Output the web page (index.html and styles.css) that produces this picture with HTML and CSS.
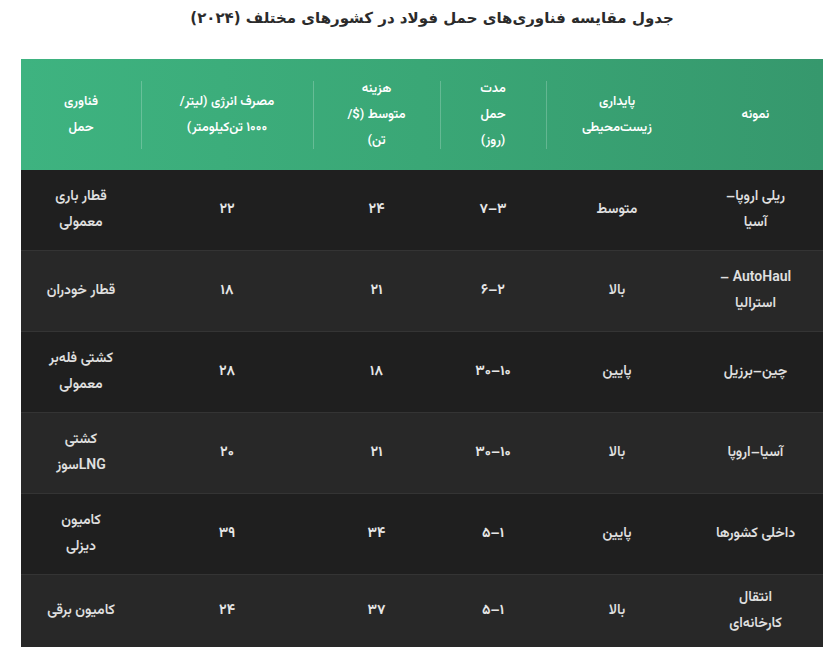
FILE: index.html
```html
<!DOCTYPE html>
<html lang="fa" dir="rtl">
<head>
<meta charset="utf-8">
<title>جدول مقایسه فناوری‌های حمل فولاد</title>
<link rel="stylesheet" href="styles.css">
</head>
<body>
<div class="page">
  <h1 class="title">جدول مقایسه فناوری‌های حمل فولاد در کشورهای مختلف (۲۰۲۴)</h1>
  <table class="grid">
    <colgroup>
      <col class="c-sample">
      <col class="c-green">
      <col class="c-time">
      <col class="c-cost">
      <col class="c-energy">
      <col class="c-tech">
    </colgroup>
    <thead>
      <tr>
        <th>نمونه</th>
        <th class="sep">پایداری<br>زیست‌محیطی</th>
        <th class="sep">مدت<br>حمل<br>(روز)</th>
        <th class="sep">هزینه<br>متوسط ($/<br>تن)</th>
        <th class="sep">مصرف انرژی (لیتر/<br>۱۰۰۰ تن‌کیلومتر)</th>
        <th>فناوری<br>حمل</th>
      </tr>
    </thead>
    <tbody>
      <tr>
        <td>ریلی اروپا–<br>آسیا</td>
        <td>متوسط</td>
        <td class="num">۳–۷</td>
        <td class="num">۲۴</td>
        <td class="num">۲۲</td>
        <td>قطار باری<br>معمولی</td>
      </tr>
      <tr>
        <td>AutoHaul –<br>استرالیا</td>
        <td>بالا</td>
        <td class="num">۲–۶</td>
        <td class="num">۲۱</td>
        <td class="num">۱۸</td>
        <td>قطار خودران</td>
      </tr>
      <tr>
        <td>چین–برزیل</td>
        <td>پایین</td>
        <td class="num">۱۰–۳۰</td>
        <td class="num">۱۸</td>
        <td class="num">۲۸</td>
        <td>کشتی فله‌بر<br>معمولی</td>
      </tr>
      <tr>
        <td>آسیا–اروپا</td>
        <td>بالا</td>
        <td class="num">۱۰–۳۰</td>
        <td class="num">۲۱</td>
        <td class="num">۲۰</td>
        <td>کشتی<br>LNGسوز</td>
      </tr>
      <tr>
        <td>داخلی کشورها</td>
        <td>پایین</td>
        <td class="num">۱–۵</td>
        <td class="num">۳۴</td>
        <td class="num">۳۹</td>
        <td>کامیون<br>دیزلی</td>
      </tr>
      <tr>
        <td>انتقال<br>کارخانه‌ای</td>
        <td>بالا</td>
        <td class="num">۱–۵</td>
        <td class="num">۳۷</td>
        <td class="num">۲۴</td>
        <td>کامیون برقی</td>
      </tr>
    </tbody>
  </table>
</div>
</body>
</html>
```

FILE: styles.css
```css
* { box-sizing: border-box; }

html, body {
  margin: 0;
  padding: 0;
  background: #ffffff;
}

body {
  font-family: "Vazirmatn", "Noto Sans Arabic", "DejaVu Sans", sans-serif;
}

.page {
  margin: 0 7px 0 21px;
  padding-top: 6px;
}

.title {
  margin: 0 0 29px 0;
  padding-left: 20px;
  text-align: center;
  font-family: "DejaVu Sans", sans-serif;
  font-size: 15px;
  line-height: 24px;
  font-weight: 700;
  color: #2b2b2b;
}

.grid {
  width: 802px;
  table-layout: fixed;
  border-collapse: collapse;
  border-spacing: 0;
  background: #1f1f1f;
}

.c-sample { width: 135px; }
.c-green  { width: 142px; }
.c-time   { width: 106px; }
.c-cost   { width: 127px; }
.c-energy { width: 172px; }
.c-tech   { width: 120px; }

.grid thead tr {
  background: linear-gradient(90deg, #3eb380 0%, #3aa776 50%, #36986d 100%);
}

.grid th {
  height: 111px;
  padding: 0 8px;
  color: #ffffff;
  font-size: 13px;
  font-weight: 600;
  line-height: 26px;
  text-align: center;
  vertical-align: middle;
  white-space: nowrap;
}

.grid th.sep {
  background-image: linear-gradient(rgba(255,255,255,0.22), rgba(255,255,255,0.22));
  background-repeat: no-repeat;
  background-size: 1px 68px;
  background-position: left center;
}

.grid td {
  padding: 14px 8px;
  color: #e0e0e0;
  font-size: 14px;
  font-weight: 600;
  line-height: 26px;
  text-align: center;
  vertical-align: middle;
  white-space: nowrap;
}

.grid tbody tr {
  background: #1f1f1f;
  border-top: 1px solid #343434;
}

.grid tbody tr:first-child {
  border-top: none;
}

.grid tbody tr:nth-child(even) {
  background: #282828;
}

.grid tbody tr:last-child td {
  padding-top: 10px;
  padding-bottom: 10px;
}

.grid td.num {
  font-weight: 700;
  color: #e6e6e6;
}
```
